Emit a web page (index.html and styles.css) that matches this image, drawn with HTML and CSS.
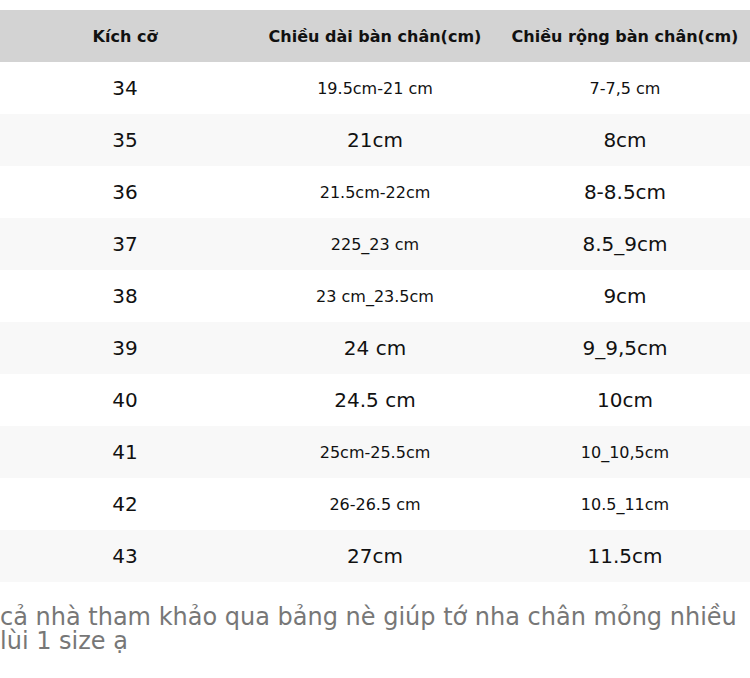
FILE: index.html
```html
<!DOCTYPE html>
<html lang="vi">
<head>
<meta charset="utf-8">
<link rel="stylesheet" href="styles.css">
</head>
<body>
<table class="size-table">
  <thead>
    <tr><th>Kích cỡ</th><th>Chiều dài bàn chân(cm)</th><th>Chiều rộng bàn chân(cm)</th></tr>
  </thead>
  <tbody>
    <tr><td>34</td><td class="sm">19.5cm-21 cm</td><td class="sm">7-7,5 cm</td></tr>
    <tr><td>35</td><td>21cm</td><td>8cm</td></tr>
    <tr><td>36</td><td class="sm">21.5cm-22cm</td><td>8-8.5cm</td></tr>
    <tr><td>37</td><td class="sm">225_23 cm</td><td>8.5_9cm</td></tr>
    <tr><td>38</td><td class="sm">23 cm_23.5cm</td><td>9cm</td></tr>
    <tr><td>39</td><td>24 cm</td><td>9_9,5cm</td></tr>
    <tr><td>40</td><td>24.5 cm</td><td>10cm</td></tr>
    <tr><td>41</td><td class="sm">25cm-25.5cm</td><td class="sm">10_10,5cm</td></tr>
    <tr><td>42</td><td class="sm">26-26.5 cm</td><td class="sm">10.5_11cm</td></tr>
    <tr><td>43</td><td>27cm</td><td>11.5cm</td></tr>
  </tbody>
</table>
<p class="note">cả nhà tham khảo qua bảng nè giúp tớ nha chân mỏng nhiều lùi 1 size ạ</p>
</body>
</html>
```
FILE: styles.css
```css
html, body {
  margin: 0;
  padding: 0;
  background: #fff;
}
body {
  padding-top: 10px;
  font-family: "DejaVu Sans", sans-serif;
  color: #111;
}
.size-table {
  width: 750px;
  border-collapse: collapse;
  table-layout: fixed;
}
.size-table th {
  background: #d3d3d3;
  height: 52px;
  padding: 0;
  font-size: 16px;
  font-weight: bold;
  text-align: center;
  color: #111;
}
.size-table td {
  height: 52px;
  padding: 0;
  font-size: 20px;
  text-align: center;
}
.size-table td.sm {
  font-size: 16px;
}
.size-table tbody tr:nth-child(even) td {
  background: #f8f8f8;
}
.note {
  margin: 23px 0 0 0;
  font-family: "DejaVu Sans", sans-serif;
  font-size: 24px;
  line-height: 24px;
  color: #777;
}
```
